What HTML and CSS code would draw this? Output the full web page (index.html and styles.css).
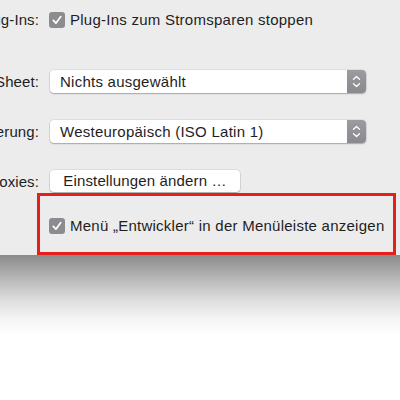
FILE: index.html
```html
<!DOCTYPE html>
<html lang="de">
<head>
<meta charset="utf-8">
<link rel="stylesheet" href="styles.css">
</head>
<body>
<div class="panel">
  <div class="row row1">
    <div class="label"><span>Plug-Ins:</span></div>
    <div class="control check">
      <span class="box"><svg viewBox="0 0 16 16" width="16" height="16"><path d="M4.3 8.4 L6.9 11.2 L11.8 4.6" fill="none" stroke="#fff" stroke-width="1.7" stroke-linecap="round" stroke-linejoin="round"/></svg></span>
      <span class="text">Plug-Ins zum Stromsparen stoppen</span>
    </div>
  </div>
  <div class="row row2">
    <div class="label"><span>Style Sheet:</span></div>
    <div class="control popup">
      <span class="ptext">Nichts ausgewählt</span>
      <span class="stepper"><svg viewBox="0 0 19 23" width="19" height="23"><path d="M6.5 9.2 L9.5 6.4 L12.5 9.2 M6.5 13.8 L9.5 16.6 L12.5 13.8" fill="none" stroke="#fff" stroke-width="1.3" stroke-linecap="round" stroke-linejoin="round"/></svg></span>
    </div>
  </div>
  <div class="row row3">
    <div class="label"><span>Standardtextcodierung:</span></div>
    <div class="control popup">
      <span class="ptext">Westeuropäisch (ISO Latin 1)</span>
      <span class="stepper"><svg viewBox="0 0 19 23" width="19" height="23"><path d="M6.5 9.2 L9.5 6.4 L12.5 9.2 M6.5 13.8 L9.5 16.6 L12.5 13.8" fill="none" stroke="#fff" stroke-width="1.3" stroke-linecap="round" stroke-linejoin="round"/></svg></span>
    </div>
  </div>
  <div class="row row4">
    <div class="label"><span>Proxies:</span></div>
    <div class="control">
      <button class="btn">Einstellungen ändern …</button>
    </div>
  </div>
  <div class="highlight">
    <div class="check">
      <span class="box"><svg viewBox="0 0 16 16" width="16" height="16"><path d="M4.3 8.4 L6.9 11.2 L11.8 4.6" fill="none" stroke="#fff" stroke-width="1.7" stroke-linecap="round" stroke-linejoin="round"/></svg></span>
      <span class="text">Menü „Entwickler“ in der Menüleiste anzeigen</span>
    </div>
  </div>
</div>
<div class="fade"></div>
</body>
</html>
```
FILE: styles.css
```css
html, body {
  margin: 0;
  padding: 0;
  background: #ffffff;
  overflow: hidden;
}
body {
  width: 400px;
  height: 400px;
  font-family: "Liberation Sans", Arial, sans-serif;
  font-size: 15px;
  letter-spacing: 0.25px;
  color: #1e1e1e;
}
.panel {
  background: #ececec;
  height: 255px;
  display: flex;
  flex-direction: column;
  box-sizing: border-box;
  padding-top: 8px;
}
.row {
  display: grid;
  grid-template-columns: 39px 1fr;
  column-gap: 10px;
  align-items: center;
}
.row1 { height: 23px; }
.row2 { margin-top: 39px; height: 23px; }
.row3 { margin-top: 27px; height: 23px; }
.row4 { margin-top: 27px; height: 22px; }
.label {
  display: flex;
  justify-content: flex-end;
  white-space: nowrap;
  min-width: 0;
  letter-spacing: 0.1px;
}
.check {
  display: flex;
  align-items: center;
  gap: 5px;
  white-space: nowrap;
}
.box {
  width: 16px;
  height: 16px;
  border-radius: 3px;
  background: #8c8c90;
  display: flex;
  flex: none;
}
.popup {
  margin-left: 1px;
  width: 316px;
  height: 23px;
  display: flex;
  background: #ffffff;
  border-radius: 4px;
  box-shadow: 0 0 0 0.5px rgba(0,0,0,0.12), 0 1px 1.5px rgba(0,0,0,0.25);
  overflow: hidden;
}
.ptext {
  flex: 1;
  padding-left: 10px;
  line-height: 23px;
  white-space: nowrap;
}
.stepper {
  width: 19px;
  height: 23px;
  background: linear-gradient(#9c9ca0, #8a8a8e);
  display: flex;
}
.btn {
  margin-left: 1px;
  width: 190px;
  height: 22px;
  padding: 0;
  border: none;
  border-radius: 4px;
  background: #ffffff;
  box-shadow: 0 0 0 0.5px rgba(0,0,0,0.12), 0 1px 1.5px rgba(0,0,0,0.25);
  font-family: inherit;
  font-size: 15px;
  letter-spacing: 0.15px;
  color: #1e1e1e;
  line-height: 22px;
  text-align: center;
}
.highlight {
  margin-top: 1px;
  margin-left: 37px;
  width: 359px;
  flex: 1;
  box-sizing: border-box;
  border: 3px solid #e3201b;
  display: flex;
  align-items: center;
  padding-left: 9px;
  padding-top: 3px;
}
.fade {
  height: 90px;
  background: linear-gradient(#8a8a8a 0%, #b5b5b5 25%, #dddddd 50%, #f6f6f6 72%, #ffffff 90%);
}
```
